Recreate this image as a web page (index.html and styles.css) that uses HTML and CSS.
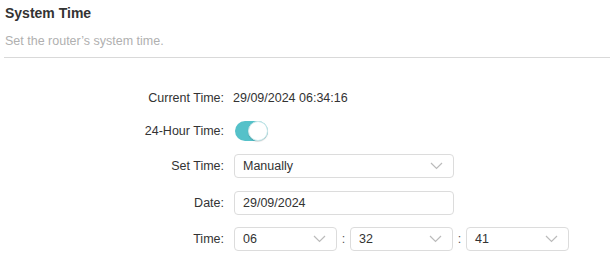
FILE: index.html
```html
<!DOCTYPE html>
<html lang="en">
<head>
    <meta charset="UTF-8">
    <title>System Time</title>
    <link rel="stylesheet" href="styles.css">
</head>
<body>

<div class="panel">
    <div class="panel-head">
        <h2 class="panel-title">System Time</h2>
        <p class="panel-desc">Set the router’s system time.</p>
    </div>

    <div class="form">
        <div class="form-row">
            <label class="form-label">Current Time:</label>
            <div class="form-value">29/09/2024 06:34:16</div>
        </div>

        <div class="form-row">
            <label class="form-label">24-Hour Time:</label>
            <div class="toggle on"><span class="toggle-knob"></span></div>
        </div>

        <div class="form-row">
            <label class="form-label">Set Time:</label>
            <div class="select wide">
                <span>Manually</span>
                <svg class="chevron" width="13" height="8" viewBox="0 0 13 8"><path d="M1 1l5.5 5.5L12 1" fill="none" stroke="#bbb" stroke-width="1.2"/></svg>
            </div>
        </div>

        <div class="form-row">
            <label class="form-label">Date:</label>
            <div class="input wide">29/09/2024</div>
        </div>

        <div class="form-row">
            <label class="form-label">Time:</label>
            <div class="time-group">
                <div class="select small">
                    <span>06</span>
                    <svg class="chevron" width="13" height="8" viewBox="0 0 13 8"><path d="M1 1l5.5 5.5L12 1" fill="none" stroke="#bbb" stroke-width="1.2"/></svg>
                </div>
                <span class="colon">:</span>
                <div class="select small">
                    <span>32</span>
                    <svg class="chevron" width="13" height="8" viewBox="0 0 13 8"><path d="M1 1l5.5 5.5L12 1" fill="none" stroke="#bbb" stroke-width="1.2"/></svg>
                </div>
                <span class="colon">:</span>
                <div class="select small">
                    <span>41</span>
                    <svg class="chevron" width="13" height="8" viewBox="0 0 13 8"><path d="M1 1l5.5 5.5L12 1" fill="none" stroke="#bbb" stroke-width="1.2"/></svg>
                </div>
            </div>
        </div>
    </div>
</div>

</body>
</html>
```

FILE: styles.css
```css
* {
    margin: 0;
    padding: 0;
    box-sizing: border-box;
}

html, body {
    height: 100%;
    background: #fff;
    font-family: "Liberation Sans", Arial, sans-serif;
    font-size: 12.5px;
    color: #333;
}

/* Header with title + description */
.panel-head {
    margin: 0 4px;
    padding: 4px 1px 9px;
    border-bottom: 1px solid #d9d9d9;
}

.panel-title {
    font-size: 14px;
    font-weight: bold;
    color: #333;
    line-height: 18px;
}

.panel-desc {
    margin-top: 12px;
    color: #b0b0b0;
    line-height: 14px;
}

/* Form rows */
.form {
    padding-top: 28px;
    display: flex;
    flex-direction: column;
    gap: 11px;
}

.form-row {
    display: flex;
    align-items: center;
    height: 24px;
}

.form-row:nth-child(2) {
    margin-top: -2px;
}

.form-row:nth-child(4) {
    margin-top: 2px;
}

.form-row:nth-child(5) {
    margin-top: 1px;
}

.form-label {
    width: 225px;
    padding-right: 1px;
    text-align: right;
}

.form-value {
    margin-left: 8px;
}

/* Toggle switch */
.toggle {
    margin-left: 10px;
    width: 33px;
    height: 20px;
    border-radius: 10px;
    background: #55c1c9;
    position: relative;
}

.toggle-knob {
    position: absolute;
    top: 0;
    right: 0;
    width: 20px;
    height: 20px;
    border-radius: 50%;
    background: #fff;
    border: 1px solid #cde9eb;
    box-shadow: 0 1px 1px rgba(0, 0, 0, 0.15);
}

/* Select + input boxes */
.select,
.input {
    height: 24px;
    border: 1px solid #dcdcdc;
    border-radius: 4px;
    background: #fff;
    display: flex;
    align-items: center;
    padding: 0 8px;
    color: #333;
}

.form-row > .select,
.form-row > .input,
.time-group {
    margin-left: 9px;
}

.select {
    justify-content: space-between;
}

.wide {
    width: 220px;
}

.small {
    width: 103px;
}

.chevron {
    margin-right: 2px;
}

.time-group {
    display: flex;
    align-items: center;
}

.colon {
    width: 13px;
    text-align: center;
    color: #555;
}
```
